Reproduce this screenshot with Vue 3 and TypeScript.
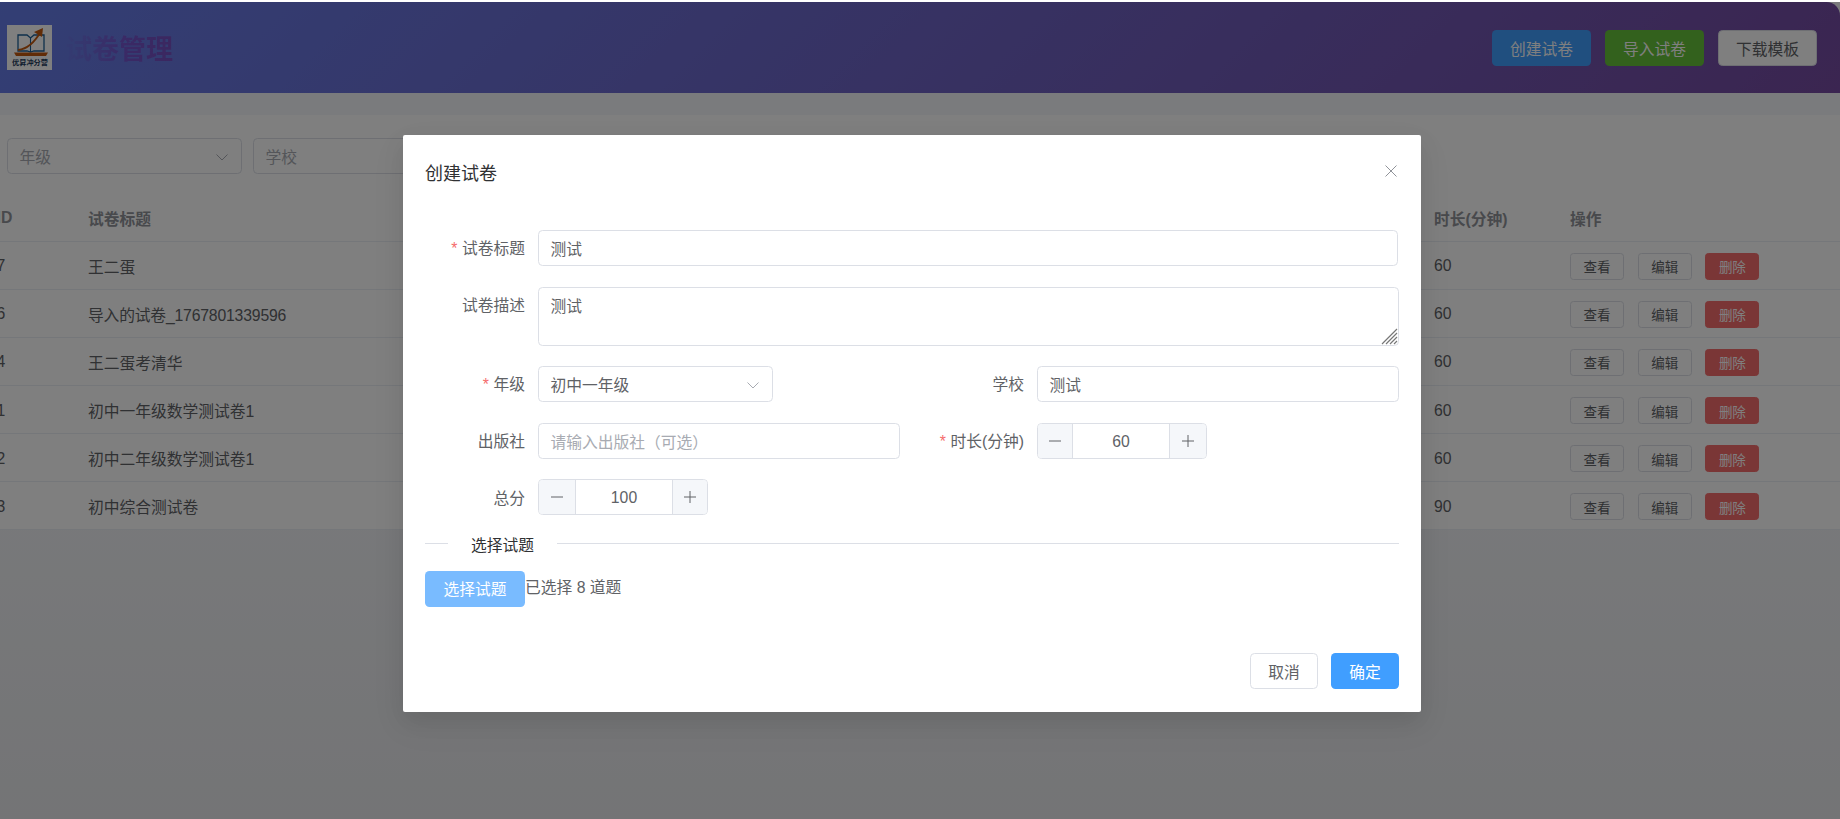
<script setup lang="ts">
interface Row { id: string; title: string; dur: number; tight?: boolean }
const rows: Row[] = [
  { id: '7', title: '王二蛋', dur: 60 },
  { id: '6', title: '导入的试卷_1767801339596', dur: 60, tight: true },
  { id: '4', title: '王二蛋考清华', dur: 60 },
  { id: '1', title: '初中一年级数学测试卷1', dur: 60 },
  { id: '2', title: '初中二年级数学测试卷1', dur: 60 },
  { id: '3', title: '初中综合测试卷', dur: 90 },
]
</script>

<template>
  <div class="viewport">
    <div class="page">
      <header class="head">
        <div class="brand">
          <div class="logo">
            <svg width="45" height="45" viewBox="0 0 45 45" fill="none">
              <path d="M11 10 H20 L23.500 13 L27 10 H37 V26 H27 L23.500 27 L20 26 H11 Z" stroke="#1d5f96" stroke-width="1.300" />
              <path d="M23.500 13 V27" stroke="#1d5f96" stroke-width="1.100" />
              <path d="M7 27.500 H41 L39 31 H9 Z" fill="#c2590f" />
              <path d="M11 25 C20 24 28 17 34 6" stroke="#c2590f" stroke-width="1.800" />
              <path d="M27 7 L36 3 L35 12 Z" fill="#c2590f" />
              <text x="23" y="39.500" text-anchor="middle" class="logo-text">优昇冲分营</text>
            </svg>
          </div>
          <h1 class="title">试卷管理</h1>
        </div>
        <div class="head-actions">
          <button class="btn blue">创建试卷</button>
          <button class="btn green">导入试卷</button>
          <button class="btn plain">下载模板</button>
        </div>
      </header>

      <section class="card">
        <div class="filters">
          <div class="field filter-select">
            <span class="ph">年级</span>
            <svg class="chev" width="14" height="14" viewBox="0 0 14 14" fill="none"><path d="M1.500 4.500 L7 10 L12.500 4.500" stroke="#a8abb2" stroke-width="1" /></svg>
          </div>
          <div class="field filter-input"><span class="ph">学校</span></div>
        </div>
        <div class="table">
          <div class="tr th">
            <span class="c-id">ID</span>
            <span class="c-title">试卷标题</span>
            <span class="c-dur">时长(分钟)</span>
            <span class="c-ops">操作</span>
          </div>
          <div v-for="r in rows" :key="r.id" class="tr td">
            <span class="c-id">{{ r.id }}</span>
            <span class="c-title" :class="{ tight: r.tight }">{{ r.title }}</span>
            <span class="c-dur">{{ r.dur }}</span>
            <span class="c-ops">
              <button class="mini">查看</button>
              <button class="mini">编辑</button>
              <button class="mini danger">删除</button>
            </span>
          </div>
        </div>
      </section>
    </div>

    <div class="overlay">
      <div class="dialog">
        <div class="dlg-head">
          <span class="dlg-title">创建试卷</span>
          <svg class="close" width="16" height="16" viewBox="0 0 16 16" fill="none"><path d="M2.500 2.500 L13.500 13.500 M13.500 2.500 L2.500 13.500" stroke="#909399" stroke-width="1" /></svg>
        </div>
        <div class="form">
          <div class="row">
            <label class="lab"><i>*</i>试卷标题</label>
            <div class="field grow first"><span>测试</span></div>
          </div>
          <div class="row tight-row">
            <label class="lab">试卷描述</label>
            <div class="field grow area">
              <span>测试</span>
              <svg class="grip" width="17" height="17" viewBox="0 0 17 17" fill="none"><path d="M1 16 L16 1 M5 16 L16 5 M9 16 L16 9 M13 16 L16 13" stroke="#777" stroke-width="1.200" /></svg>
            </div>
          </div>
          <div class="row split">
            <div class="half">
              <label class="lab"><i>*</i>年级</label>
              <div class="field select">
                <span>初中一年级</span>
                <svg class="chev" width="14" height="14" viewBox="0 0 14 14" fill="none"><path d="M1.500 4.500 L7 10 L12.500 4.500" stroke="#a8abb2" stroke-width="1" /></svg>
              </div>
            </div>
            <div class="half">
              <label class="lab">学校</label>
              <div class="field grow"><span>测试</span></div>
            </div>
          </div>
          <div class="row split tight-row">
            <div class="half">
              <label class="lab">出版社</label>
              <div class="field grow"><span class="ph">请输入出版社（可选）</span></div>
            </div>
            <div class="half">
              <label class="lab"><i>*</i>时长(分钟)</label>
              <div class="num">
                <span class="step narrow"><svg width="14" height="14" viewBox="0 0 14 14"><path d="M1 7 H13" stroke="#606266" stroke-width="1" /></svg></span>
                <span class="val">60</span>
                <span class="step wide end"><svg width="14" height="14" viewBox="0 0 14 14"><path d="M1 7 H13 M7 1 V13" stroke="#606266" stroke-width="1" /></svg></span>
              </div>
            </div>
          </div>
          <div class="row last">
            <label class="lab">总分</label>
            <div class="num">
              <span class="step wide"><svg width="14" height="14" viewBox="0 0 14 14"><path d="M1 7 H13" stroke="#606266" stroke-width="1" /></svg></span>
              <span class="val">100</span>
              <span class="step narrow end"><svg width="14" height="14" viewBox="0 0 14 14"><path d="M1 7 H13 M7 1 V13" stroke="#606266" stroke-width="1" /></svg></span>
            </div>
          </div>
        </div>
        <div class="divider"><span>选择试题</span></div>
        <div class="pick">
          <button class="btn pick-btn">选择试题</button>
          <span class="picked">已选择 8 道题</span>
        </div>
        <div class="dlg-foot">
          <button class="btn cancel">取消</button>
          <button class="btn ok">确定</button>
        </div>
      </div>
    </div>
  </div>
</template>

<style>
html, body { margin: 0; padding: 0; overflow: hidden; background: #fff; }
</style>

<style scoped>
* { box-sizing: border-box; }
.viewport {
  position: relative;
  width: 1840px;
  height: 819px;
  overflow: hidden;
  font-family: "Liberation Sans", "Noto Sans CJK SC", sans-serif;
  font-size: 15.75px;
  color: #606266;
}
.page {
  width: 1856px;
  height: 817px;
  margin: 2px 0 0 -16px;
  background: linear-gradient(180deg, #f5f7fa 0%, #f5f7fa 40%, #e8e9ec 100%);
}
.head {
  height: 91px;
  padding: 0 23px;
  display: flex;
  align-items: center;
  justify-content: space-between;
  background: linear-gradient(135deg, #667eea 0%, #764ba2 100%);
  border-radius: 13.500px 13.500px 0 0;
}
.brand { display: flex; align-items: center; gap: 13px; }
.logo { width: 45px; height: 45px; background: #fff; }
.logo svg { display: block; }
.logo-text { font-size: 7.200px; font-weight: 700; fill: #1b3a5c; }
.title {
  margin: 0;
  font-size: 27px;
  font-weight: 700;
  background: linear-gradient(90deg, #6878e4 0%, #7454cc 55%, #764fc0 100%);
  -webkit-background-clip: text;
  background-clip: text;
  color: transparent;
}
.head-actions { display: flex; gap: 14px; }
.head-actions .btn { padding-top: 1px; }
.btn {
  height: 36px;
  width: 99px;
  padding: 0;
  border: 1px solid transparent;
  border-radius: 4.500px;
  font: inherit;
  color: #fff;
  background: #fff;
}
.blue { background: #409eff; }
.green { background: #67c23a; }
.plain { background: #fff; color: #606266; border-color: #dcdfe6; }
.card {
  margin-top: 22px;
  height: 415px;
  background: #fff;
}
.filters { display: flex; gap: 11px; padding: 23px 0 0 23px; }
.field {
  height: 36px;
  padding: 1px 12px 0 11.500px;
  display: flex;
  align-items: center;
  justify-content: space-between;
  background: #fff;
  border: 1px solid #dcdfe6;
  border-radius: 4.500px;
  position: relative;
}
.filter-select { width: 235px; }
.filter-input { width: 235px; }
.ph { color: #a8abb2; }
.table { margin-top: 13px; font-size: 15.75px; }
.tr {
  display: flex;
  align-items: center;
  border-bottom: 1px solid #ebeef5;
}
.th { height: 54.500px; padding-top: 9px; font-weight: 700; color: #909399; }
.td { height: 48.170px; padding-top: 2px; }
.c-id { width: 104px; padding-left: 12.500px; flex: none; }
.c-title { width: 1346px; flex: none; }
.tight { letter-spacing: -0.170px; }
.c-dur { width: 136px; flex: none; }
.c-ops { display: flex; gap: 13.700px; }
.mini {
  width: 54px;
  height: 27px;
  padding: 0;
  font: inherit;
  font-size: 13.500px;
  color: #606266;
  background: #fff;
  border: 1px solid #dcdfe6;
  border-radius: 3.400px;
}
.danger { background: #f56c6c; border-color: #f56c6c; color: #fff; }

.overlay {
  position: absolute;
  inset: 2px 0 0 0;
  background: rgba(0, 0, 0, 0.5);
  display: flex;
  justify-content: center;
  align-items: flex-start;
}
.dialog {
  width: 1018px;
  height: 577px;
  margin: 133px 0 0 -16px;
  padding: 0 22px;
  background: #fff;
  border-radius: 2px;
  box-shadow: 0 13px 36px 4px rgba(0, 0, 0, 0.04), 0 9px 22px rgba(0, 0, 0, 0.08);
  display: flex;
  flex-direction: column;
}
.dlg-head {
  height: 95px;
  flex: none;
  display: flex;
  justify-content: space-between;
  padding-top: 25px;
}
.dlg-title { font-size: 18px; color: #303133; line-height: 28px; }
.close { margin: 3px 0 0; }
.form { display: flex; flex-direction: column; }
.row { display: flex; margin-bottom: 21px; }
.row.tight-row { margin-bottom: 20px; }
.row.last { margin-bottom: 0; }
.lab {
  width: 100px;
  margin-right: 13px;
  flex: none;
  height: 36px;
  line-height: 38px;
  text-align: right;
  white-space: nowrap;
}
.last .lab { line-height: 39px; }
.lab i { font-style: normal; color: #f56c6c; margin-right: 4.500px; }
.grow { flex: 1; }
.first { margin-right: 1px; }
.area {
  height: 59px;
  align-items: flex-start;
  padding-top: 6px;
}
.grip { position: absolute; right: 0; bottom: 0; }
.half { display: flex; width: 499px; }
.half:last-child { width: 475px; }
.half:first-child .field.grow { flex: none; width: 362px; }
.select { width: 235px; flex: none; }
.chev { flex: none; }
.num {
  width: 170px;
  height: 36px;
  display: flex;
  border: 1px solid #dcdfe6;
  border-radius: 4.500px;
  overflow: hidden;
  background: #fff;
  color: #606266;
}
.step {
  flex: none;
  display: flex;
  align-items: center;
  justify-content: center;
  background: #f5f7fa;
  border-right: 1px solid #dcdfe6;
}
.step.end { border-right: 0; border-left: 1px solid #dcdfe6; }
.narrow { width: 35px; }
.wide { width: 37px; }
.val { flex: 1; text-align: center; line-height: 36px; }
.divider {
  margin-top: 28px;
  height: 1px;
  background: #dcdfe6;
  position: relative;
  flex: none;
}
.divider span {
  position: absolute;
  left: 23px;
  top: -10px;
  padding: 0 23px;
  background: #fff;
  color: #303133;
  line-height: 26px;
  white-space: nowrap;
}
.pick { display: flex; margin-top: 27px; align-items: flex-start; }
.pick-btn { width: 100px; background: #79bbff; padding-bottom: 1px; }
.picked { line-height: 33px; white-space: nowrap; }
.dlg-foot { display: flex; justify-content: flex-end; gap: 13px; margin-top: 46px; }
.cancel { width: 68px; color: #606266; border-color: #dcdfe6; }
.ok { width: 68px; background: #409eff; }
</style>
